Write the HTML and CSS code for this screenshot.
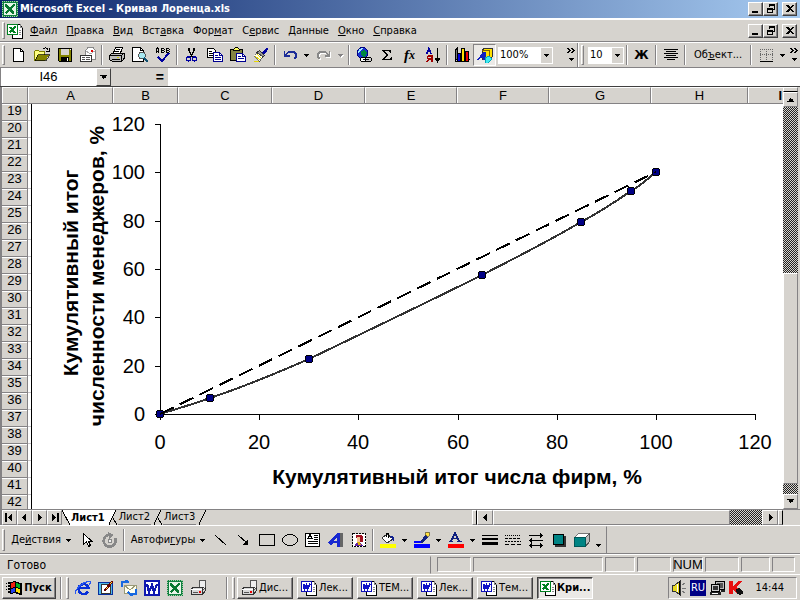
FILE: index.html
```html
<!DOCTYPE html>
<html lang="ru">
<head>
<meta charset="utf-8">
<title>Microsoft Excel - Кривая Лоренца.xls</title>
<link rel="stylesheet" href="styles.css">
</head>
<body>
<svg class="defs" aria-hidden="true">
  <symbol id="xl" viewBox="0 0 16 16"><rect width="16" height="16" fill="#108040"/><path d="M0 .5h16M0 15.500h16M.5 0v16M15.500 0v16" stroke="#a8d0a8" stroke-dasharray="1 1"/><path d="M2 2h12v12H2z" fill="#e8f4e8"/><path d="M4 3.500l8 9M3 3.500l8 9" stroke="#087830" stroke-width="2"/><path d="M12.500 3.500l-9 9" stroke="#087830" stroke-width="1.500"/></symbol>
  <symbol id="xldoc" viewBox="0 0 16 16"><path d="M6 1.500h7l2.500 3v11h-10z" fill="#fff" stroke="#000"/><path d="M13 1v3.500h3M12 7.500h2M12 9.500h2M12 11.500h2" fill="none" stroke="#888"/><rect x=".5" y="1.500" width="10" height="10" fill="#fff" stroke="#008020"/><path d="M3 4l5 6M8.500 3.500l-6 6" stroke="#008020" stroke-width="2"/></symbol>
  <symbol id="wddoc" viewBox="0 0 16 16"><path d="M6 1.500h7l2.500 3v11h-10z" fill="#fff" stroke="#000"/><path d="M13 1v3.500h3M12 7.500h2M12 9.500h2M12 11.500h2" fill="none" stroke="#888"/><rect x=".5" y="1.500" width="10" height="10" fill="#fff" stroke="#1010b8"/><path d="M2.500 4l1 5 2-4 1 4 2.500-5.500" fill="none" stroke="#1010c8" stroke-width="1.800"/></symbol>
  <symbol id="down" viewBox="0 0 5 3"><path d="M0 0h5v1H4v1H3v1H2V2H1V1H0z" fill="currentColor"/></symbol>
  <symbol id="more" viewBox="0 0 9 14"><path d="M0 0h2l2 2.500L2 5H0l2-2.500zM4 0h2l2 2.500L6 5H4l2-2.500zM2 10h5L4.500 13z"/></symbol>
  <symbol id="min" viewBox="0 0 10 10"><path d="M1 7h6v2H1z"/></symbol>
  <symbol id="rest" viewBox="0 0 10 10"><path d="M3 0h6v6H7V5h1V2H4v1H3zM1 4h6v5H1zM2 6v2h4V6z" fill-rule="evenodd"/></symbol>
  <symbol id="cls" viewBox="0 0 10 10"><path d="M1 1h2l2 2 2-2h2L6 4.500 9 8H7L5 6 3 8H1l3-3.500z"/></symbol>
  <symbol id="drive" viewBox="0 0 16 16"><path d="M10 0h5v8l-2 2H9V2z" fill="#eee" stroke="#555"/><path d="M1 9l3-2h10l-2 2v5H1z" fill="#d8d8d8" stroke="#333"/><path d="M1 9h11" stroke="#fff"/><path d="M3 12h5" stroke="#555"/><path d="M9 11h2v2H9z" fill="#e00"/><path d="M13 14l2-3V7" fill="none" stroke="#333"/></symbol>
</svg>
<div class="window">
  <header class="title">
    <svg class="ic"><use href="#xl"/></svg>
    <h1>Microsoft Excel - Кривая Лоренца.xls</h1>
    <div class="caption">
      <button aria-label="Свернуть"><svg><use href="#min"/></svg></button>
      <button aria-label="Восстановить"><svg><use href="#rest"/></svg></button>
      <button aria-label="Закрыть" class="close"><svg><use href="#cls"/></svg></button>
    </div>
  </header>

  <nav class="menu">
    <i class="grip"></i>
    <svg class="ic"><use href="#xldoc"/></svg>
    <button><u>Ф</u>айл</button><button><u>П</u>равка</button><button><u>В</u>ид</button><button>Вст<u>а</u>вка</button><button>Фор<u>м</u>ат</button><button>С<u>е</u>рвис</button><button><u>Д</u>анные</button><button><u>О</u>кно</button><button><u>С</u>правка</button>
    <div class="caption">
      <button aria-label="Свернуть книгу"><svg><use href="#min"/></svg></button>
      <button aria-label="Восстановить книгу"><svg><use href="#rest"/></svg></button>
      <button aria-label="Закрыть книгу" class="close"><svg><use href="#cls"/></svg></button>
    </div>
  </nav>

  <div class="tools">
    <div class="bar standard">
      <i class="grip"></i>
      <button class="tb" aria-label="Создать"><svg class="ic" viewBox="0 0 16 16"><path d="M2.500 1.500h7l3 3v10h-10z" fill="#fff" stroke="#000"/><path d="M9.500 1.500v3h3" fill="none" stroke="#000"/></svg></button>
      <button class="tb" aria-label="Открыть"><svg class="ic" viewBox="0 0 16 16"><path d="M.5 13.500v-9l1-1h3l1 1h5v3" fill="#ffff80" stroke="#808000"/><path d="M.5 13.500l3-6h12l-4 6z" fill="#848400" stroke="#000" stroke-width=".7"/><path d="M9 2c2-2 4-1 5 1m1-2v3h-3" fill="none" stroke="#000"/></svg></button>
      <button class="tb" aria-label="Сохранить"><svg class="ic" viewBox="0 0 16 16"><path d="M1.500 1.500h13v13h-12l-1-1z" fill="#848400" stroke="#000"/><path d="M4 2h8v6H4z" fill="#d6d3ce"/><path d="M4 10h8v4H4z" fill="#000"/><path d="M10 11h1v3h-1zM13 2h1v1h-1z" fill="#fff"/></svg></button>
      <button class="tb" aria-label="Сообщение"><svg class="ic" viewBox="0 0 16 16"><path d="M5.500 9V3.500L8 .5h5l2.500 3v9h-4" fill="#fff" stroke="#888"/><path d="M6 4l4 3 5-3" fill="none" stroke="#aaa"/><path d="M11 3h2v2h-2z" fill="#e00000"/><path d="M.5 8.500h11v6H.5z" fill="#fff" stroke="#333"/><path d="M2 10.500h3m1 0h4M2 12.500h3m1 0h4" stroke="#555"/></svg></button>
      <i class="sep"></i>
      <button class="tb" aria-label="Печать"><svg class="ic" viewBox="0 0 16 16"><path d="M4.500 6l2-5.500h7l-2 5.500" fill="#fff" stroke="#000"/><path d="M7 2.500h4M6 4.500h4" stroke="#000"/><path d="M.5 8.500l3-2.500h12v5l-3 3.500H3.500l-3-2z" fill="#bbb" stroke="#000"/><path d="M1 8.500h11l3-2M12.500 9v5M3 12.500h8" fill="none" stroke="#000"/><path d="M8 10h2v1H8z" fill="#cc0"/></svg></button>
      <button class="tb" aria-label="Предварительный просмотр"><svg class="ic" viewBox="0 0 16 16"><path d="M.5.5h8l3 3v11H.5z" fill="#fff" stroke="#000"/><path d="M8.500.5v3h3" fill="none" stroke="#000"/><circle cx="10" cy="8.500" r="3.300" fill="#a8e8f0" stroke="#555"/><path d="M12 11l4 4" stroke="#105070" stroke-width="2"/></svg></button>
      <button class="tb" aria-label="Орфография"><svg class="ic" viewBox="0 0 16 16"><path d="M1.500 6V2l1-1 1 1v4M2 4.500h2M6.500 6V1.500h2M7 3.500h2M7 5.500h2M9.500 2v1M9.500 4v1M11.500 6V1.500h2M12 3.500h2M12 5.500h2M14.500 2v1M14.500 4v1" fill="none" stroke="#000"/><path d="M3 10l4 4 7-8" fill="none" stroke="#0000a0" stroke-width="2"/></svg></button>
      <i class="sep"></i>
      <button class="tb" aria-label="Вырезать"><svg class="ic" viewBox="0 0 16 16"><path d="M5 1v3l4 7M10 1v3L6 11" fill="none" stroke="#000" stroke-width="1.300"/><circle cx="4.500" cy="12" r="2" fill="none" stroke="#0000a0" stroke-width="1.300"/><circle cx="10.500" cy="12" r="2" fill="none" stroke="#0000a0" stroke-width="1.300"/></svg></button>
      <button class="tb" aria-label="Копировать"><svg class="ic" viewBox="0 0 16 16"><path d="M.5 1.500h6l2 2v7h-8z" fill="#fff" stroke="#000"/><path d="M2 4.500h3M2 6.500h4M2 8.500h4" stroke="#000"/><path d="M6.500 5.500h6l3 3v6h-9z" fill="#fff" stroke="#000090"/><path d="M12.500 5.500v3h3M8 8.500h3M8 10.500h6M8 12.500h6" fill="none" stroke="#000090"/></svg></button>
      <button class="tb" aria-label="Вставить"><svg class="ic" viewBox="0 0 16 16"><path d="M.5 2.500h12v11H.5z" fill="#848442" stroke="#000"/><path d="M3.500 3.500v-1l2-2h2l2 2v1z" fill="#ffff60" stroke="#000"/><path d="M6.500 6.500h6l3 3v5h-9z" fill="#fff" stroke="#000090"/><path d="M8 9.500h3M8 11.500h6M12.500 6.500v3h3" fill="none" stroke="#000090"/></svg></button>
      <button class="tb" aria-label="Формат по образцу"><svg class="ic" viewBox="0 0 16 16"><path d="M14 1l1 1-4 5-2-1z" fill="#0000a0" stroke="#0000a0"/><path d="M6.500 3.500l5 5-2 1.500-6-4z" fill="#999" stroke="#333"/><path d="M3.500 6l6 4-3 4.500L.5 9z" fill="#fffff0" stroke="#333" stroke-width=".7"/><path d="M2 9l5 4m-3-6l4 4M1 14.500h5" stroke="#e8d800"/></svg></button>
      <i class="sep"></i>
      <button class="tb" aria-label="Отменить"><svg class="ic" viewBox="0 0 16 16"><path d="M2.500 4v5h5M3 8.500l4-3.500h5l2 2v3l-2 2" fill="none" stroke="#1c2c98" stroke-width="1.500"/></svg></button>
      <button class="drop" aria-label="Список отмены"><svg><use href="#down"/></svg></button>
      <button class="tb off" aria-label="Вернуть"><svg class="ic" viewBox="0 0 16 16"><path d="M13.500 4v5h-5M13 8.500L9 5H4L2 7v3l2 2" fill="none" stroke="#888" stroke-width="1.500"/></svg></button>
      <button class="drop off" aria-label="Список возврата"><svg><use href="#down"/></svg></button>
      <i class="sep"></i>
      <button class="tb" aria-label="Гиперссылка"><svg class="ic" viewBox="0 0 16 16"><circle cx="6.500" cy="6" r="5.500" fill="#1830d0" stroke="#000080"/><path d="M5 4l3-1 3 2-1 4-3 1-2-2z" fill="#008840"/><path d="M3 2l4-1-3 4-2 1z" fill="#a0f0ff"/><rect x="4.500" y="10.500" width="6" height="4" rx="2" fill="#fff" stroke="#000"/><rect x="9.500" y="10.500" width="6" height="4" rx="2" fill="#ccc" stroke="#000"/><path d="M7 12.500h6" stroke="#000"/></svg></button>
      <button class="tb" aria-label="Автосумма"><svg class="ic" viewBox="0 0 16 16"><path d="M3 3h9v3h-1l-1-2H6l3 4-4 4h6l1-2h1v3H3v-1l4-4-4-4z" fill="#000"/></svg></button>
      <button class="tb fx" aria-label="Вставка функции"><i>f</i><sub>x</sub></button>
      <button class="tb" aria-label="Сортировка по возрастанию"><svg class="ic" viewBox="0 0 16 16"><path d="M1 6.500h2m2 0h2M2 6l2-5 2 5M2.500 4.500h3" fill="none" stroke="#0000a0" stroke-width="1.300"/><path d="M7 15V9H3.500L2.500 10v1l1 1H7M4.500 12L2 15" fill="none" stroke="#a00000" stroke-width="1.600"/><path d="M12.500 1v13M10 11l2.500 4 2.500-4z" stroke="#000"/></svg></button>
      <i class="sep"></i>
      <button class="tb" aria-label="Мастер диаграмм"><svg class="ic" viewBox="0 0 16 16"><path d="M1 4l2-3v11l-2 2zM1 14h13l2-2" fill="#777" stroke="#000"/><path d="M3.500 6.500h3v8h-3z" fill="#0000e0" stroke="#000"/><path d="M7.500 1.500h3v13h-3z" fill="#ffe000" stroke="#000"/><path d="M11.500 4.500h3v10h-3z" fill="#f00000" stroke="#000"/></svg></button>
      <button class="tb on" aria-label="Рисование"><svg class="ic" viewBox="0 0 16 16"><path d="M5 3l3-2h7v9l-2 2H5z" fill="#ffe000" stroke="#333"/><path d="M5 3.500h7M12.500 3v8" fill="none" stroke="#806000"/><path d="M0 13L6 5h3v8H6v-2H3l-1 2z" fill="#1020c0"/><path d="M8 11l4-2 3 3-4 4H9z" fill="#40e8f0" stroke="#00a8b8"/></svg></button>
      <span class="combo zoom"><select aria-label="Масштаб"><option>100%</option></select><svg><use href="#down"/></svg></span>
      <button class="more" aria-label="Другие кнопки"><svg><use href="#more"/></svg></button>
    </div>
    <div class="bar format">
      <i class="grip"></i>
      <span class="combo size"><select aria-label="Размер шрифта"><option>10</option></select><svg><use href="#down"/></svg></span>
      <i class="sep"></i>
      <button class="tb bold">Ж</button>
      <i class="sep"></i>
      <button class="tb" aria-label="По центру"><svg class="ic" viewBox="0 0 16 16"><path d="M1 2.500h14M3 4.500h10M1 6.500h14M3 8.500h10M1 10.500h14M4 12.500h8" stroke="#000"/></svg></button>
      <i class="sep"></i>
      <button class="object">Об<u>ъ</u>ект...</button>
      <i class="sep"></i>
      <button class="tb" aria-label="Границы"><svg class="ic" viewBox="0 0 16 16"><path d="M2 2.500h13M2 7.500h13M2.500 2v11M8.500 2v11M14.500 2v11" stroke="#666" stroke-dasharray="1 1"/><path d="M2 14.500h13" stroke="#000"/></svg></button>
      <button class="drop" aria-label="Виды границ"><svg><use href="#down"/></svg></button>
      <button class="more" aria-label="Другие кнопки"><svg><use href="#more"/></svg></button>
    </div>
  </div>

  <div class="formula">
    <div class="name"><input aria-label="Имя" value="I46"><button aria-label="Список имён"><svg><use href="#down"/></svg></button></div>
    <button class="equals">=</button>
    <input class="fx-input" aria-label="Строка формул">
  </div>

  <main class="sheet">
    <div class="cols"><span></span><span>A</span><span>B</span><span>C</span><span>D</span><span>E</span><span>F</span><span>G</span><span>H</span><span class="cur">I</span></div>
    <div class="rows"><div>
      <span>19</span><span>20</span><span>21</span><span>22</span><span>23</span><span>24</span><span>25</span><span>26</span><span>27</span><span>28</span><span>29</span><span>30</span><span>31</span><span>32</span><span>33</span><span>34</span><span>35</span><span>36</span><span>37</span><span>38</span><span>39</span><span>40</span><span>41</span><span>42</span>
    </div></div>
    <div class="plot">
      <svg class="chart" viewBox="28 104 755 405" role="img" aria-label="Кривая Лоренца">
        <path class="frame" d="M31.500 104v405"/>
        <path class="guides" d="M28 120.500h3m-3 17h3m-3 17h3m-3 17h3m-3 17h3m-3 17h3m-3 17h3m-3 17h3m-3 17h3m-3 17h3m-3 17h3m-3 17h3m-3 17h3m-3 17h3m-3 17h3m-3 17h3m-3 17h3m-3 17h3m-3 17h3m-3 17h3m-3 17h3m-3 17h3m-3 17h3"/>
        <path class="axis" d="M160.500 124v296M155 414.500h601M155 124.500h5m-5 48h5m-5 49h5m-5 48h5m-5 48h5m-5 49h5M259.500 414v6M358.500 414v6M458.500 414v6M557.500 414v6M656.500 414v6M755.500 414v6"/>
        <path class="lorenz" d="M160 414C177 409 193 404 210 398C243 387 277 373 309 359C367 331 424 304 482 275C515 258 549 241 581 222C598 213 615 202 631 191C640 186 648 179 656 172"/>
        <g class="dots"><circle cx="160" cy="414" r="4"/><circle cx="210" cy="398" r="4"/><circle cx="309" cy="359" r="4"/><circle cx="482" cy="275" r="4"/><circle cx="581" cy="222" r="4"/><circle cx="631" cy="191" r="4"/><circle cx="656" cy="172" r="4"/></g>
        <path class="equal" d="M160 414L656 172"/>
        <g class="ylab"><text x="145" y="131">120</text><text x="145" y="179">100</text><text x="145" y="228">80</text><text x="145" y="276">60</text><text x="145" y="324">40</text><text x="145" y="373">20</text><text x="145" y="421">0</text></g>
        <g class="xlab"><text x="160" y="449">0</text><text x="259" y="449">20</text><text x="358" y="449">40</text><text x="458" y="449">60</text><text x="557" y="449">80</text><text x="656" y="449">100</text><text x="755" y="449">120</text></g>
        <g class="names"><text x="457" y="484">Кумулятивный итог числа фирм, %</text><text transform="translate(78 273) rotate(-90)">Кумулятивный итог</text><text transform="translate(104 276) rotate(-90)">численности менеджеров, %</text></g>
      </svg>
    </div>
    <div class="vscroll">
      <i class="split"></i>
      <button aria-label="Вверх"><svg class="up"><use href="#down"/></svg></button>
      <i class="track before"></i><i class="thumb"></i><i class="track after"></i>
      <button aria-label="Вниз"><svg><use href="#down"/></svg></button>
    </div>
  </main>

  <div class="tabs">
    <div class="nav">
      <button aria-label="Первый лист"><svg viewBox="0 0 9 9"><path d="M0 0h2v9H0zM7 0v9L3 4.500z"/></svg></button>
      <button aria-label="Предыдущий лист"><svg viewBox="0 0 9 9"><path d="M6 0v9L2 4.500z"/></svg></button>
      <button aria-label="Следующий лист"><svg viewBox="0 0 9 9"><path d="M3 0v9l4-4.500z"/></svg></button>
      <button aria-label="Последний лист"><svg viewBox="0 0 9 9"><path d="M2 0v9l4-4.500zM7 0h2v9H7z"/></svg></button>
    </div>
    <svg class="edge first" viewBox="0 0 8 15"><path d="M0 0h8v15z" fill="#fff"/><path d="M0 0l8 15" stroke="#000"/></svg><button class="tab active">Лист1</button><svg class="edge" viewBox="0 0 12 15"><path d="M0 0h10L3 15H0z" fill="#fff"/><path d="M3 14.500L10 0M7 8l4 7" stroke="#000" fill="none"/></svg><button class="tab">Лист2</button><svg class="edge" viewBox="0 0 12 15"><path d="M3 14.500L10 0M7 8l4 7" stroke="#000" fill="none"/></svg><button class="tab">Лист3</button><svg class="edge" viewBox="0 0 12 15"><path d="M3 14.500L10 0" stroke="#000"/></svg>
    <div class="hscroll">
      <i class="split"></i>
      <button aria-label="Влево"><svg viewBox="0 0 9 9"><path d="M6 1v7L2 4.500z"/></svg></button>
      <i class="thumb"></i><i class="track"></i>
      <button aria-label="Вправо"><svg viewBox="0 0 9 9"><path d="M3 1v7l4-3.500z"/></svg></button>
      <i class="split"></i>
    </div>
  </div>

  <div class="dock">
  <div class="draw">
    <i class="grip"></i>
    <button class="word actions"><span>Де<u>й</u>ствия</span><svg><use href="#down"/></svg></button>
    <button class="tb" aria-label="Выбор объектов"><svg class="ic" viewBox="0 0 16 16"><path d="M4.500 1.500v11l3-3 2 5 2-1-2-4h3.500z" fill="#fff" stroke="#000"/></svg></button>
    <button class="tb" aria-label="Свободное вращение"><svg class="ic" viewBox="0 0 16 16"><path d="M6 3a6 6 0 1 0 7 3" fill="none" stroke="#888" stroke-width="2.500"/><path d="M6 0l6 3-5 4z" fill="#888"/><circle cx="8" cy="9" r="2" fill="#eee" stroke="#888"/></svg></button>
    <i class="sep"></i>
    <button class="word shapes"><span>Автофи<u>г</u>уры</span><svg><use href="#down"/></svg></button>
    <button class="tb" aria-label="Линия"><svg class="ic" viewBox="0 0 16 16"><path d="M2 3l11 10" stroke="#000"/></svg></button>
    <button class="tb" aria-label="Стрелка"><svg class="ic" viewBox="0 0 16 16"><path d="M2 3l9 8" stroke="#000"/><path d="M12 7v6H6z"/></svg></button>
    <button class="tb" aria-label="Прямоугольник"><svg class="ic" viewBox="0 0 16 16"><path d="M.5 2.500h15v11H.5z" fill="none" stroke="#000"/></svg></button>
    <button class="tb" aria-label="Овал"><svg class="ic" viewBox="0 0 16 16"><ellipse cx="8" cy="8" rx="7.500" ry="5.500" fill="none" stroke="#000"/></svg></button>
    <button class="tb" aria-label="Надпись"><svg class="ic" viewBox="0 0 16 16"><path d="M.5 1.500h14v13H.5z" fill="#fff" stroke="#000"/><path d="M2.500 7.500l2.500-5 2.500 5M3 6h4M9 3.500h4M9 5.500h4M9 7.500h4M3 9.500h10M3 11.500h10" fill="none" stroke="#000"/></svg></button>
    <button class="tb" aria-label="Объект WordArt"><svg class="ic" viewBox="0 0 16 16"><path d="M12 1h3v14h-3z" fill="#666"/><path d="M0 11L9 1h3v14H9v-4H5l-2 2z" fill="#1828d0"/><path d="M9 5v4H6z" fill="#d6d3ce"/></svg></button>
    <button class="tb" aria-label="Картинка"><svg class="ic" viewBox="0 0 16 16"><path d="M1.500 1.500h13v13h-13z" fill="#fff" stroke="#000" stroke-dasharray="2 1"/><path d="M5 3h5l2 2v5H9V6H5z" fill="#a01020"/><path d="M6 5h3v5H6z" fill="#f4c090"/><path d="M4 14l1-3h5l2 3z" fill="#6020a0"/><path d="M7 10l2 3" stroke="#e0b000" stroke-width="2"/></svg></button>
    <i class="sep"></i>
    <button class="tb" aria-label="Цвет заливки"><svg class="ic" viewBox="0 0 16 16"><path d="M2 6l5-4 6 5-6 4z" fill="#fff" stroke="#333"/><path d="M6 5V1h2v5" fill="none" stroke="#000"/><path d="M10 4c4 0 5 2 4 6l-2-3z" fill="#102090"/><path d="M0 12h16v4H0z" fill="#ff0"/></svg></button><button class="drop" aria-label="Цвета заливки"><svg><use href="#down"/></svg></button>
    <button class="tb" aria-label="Цвет линий"><svg class="ic" viewBox="0 0 16 16"><path d="M0 9.500h5l2 1" fill="none" stroke="#00f" stroke-width="2"/><path d="M7 9l4-6 3 2-4 5-3 1z" fill="#102080"/><path d="M12 0h3l1 2-2 3-3-2z" fill="#ffe040" stroke="#333" stroke-width=".6"/><path d="M0 12h16v4H0z" fill="#00f"/></svg></button><button class="drop" aria-label="Цвета линий"><svg><use href="#down"/></svg></button>
    <button class="tb" aria-label="Цвет шрифта"><svg class="ic" viewBox="0 0 16 16"><path d="M1 9.500h4m4 0h5M3 9l4-8 4 8M5 6.500h5" fill="none" stroke="#102080" stroke-width="1.600"/><path d="M0 12h16v4H0z" fill="#f00"/></svg></button><button class="drop" aria-label="Цвета шрифта"><svg><use href="#down"/></svg></button>
    <button class="tb" aria-label="Тип линии"><svg class="ic" viewBox="0 0 16 16"><path d="M0 3h16v1H0zM0 6h16v2H0zM0 10h16v3H0z"/></svg></button>
    <button class="tb" aria-label="Тип штриха"><svg class="ic" viewBox="0 0 16 16"><path d="M0 3.500h16" stroke="#000" stroke-dasharray="1 1"/><path d="M0 6.500h16" stroke="#000" stroke-dasharray="3 1"/><path d="M0 9.500h16" stroke="#000" stroke-dasharray="2 1"/><path d="M0 12.500h16" stroke="#000" stroke-dasharray="4 2"/></svg></button>
    <button class="tb" aria-label="Вид стрелки"><svg class="ic" viewBox="0 0 16 16"><path d="M1 3.500h14M1 8.500h14M1 13.500h14" stroke="#000"/><path d="M12 1v5l3-2.500zM4 6v5L1 8.500zM4 11v5l-3-2.500zM12 11v5l3-2.500z"/></svg></button>
    <button class="tb" aria-label="Тень"><svg class="ic" viewBox="0 0 16 16"><path d="M4 4h11v11H4z" fill="#333"/><path d="M2.500 2.500h10v10h-10z" fill="#008484" stroke="#000"/></svg></button>
    <button class="tb" aria-label="Объём"><svg class="ic" viewBox="0 0 16 16"><path d="M.5 5.500l4-4h11l-4 4z" fill="#fff" stroke="#777"/><path d="M11.500 5.500l4-4v8l-4 5z" fill="#bbb" stroke="#555"/><path d="M.5 5.500h11v9H.5z" fill="#008484" stroke="#005858"/></svg></button>
    <button class="drop last" aria-label="Другие кнопки"><svg><use href="#down"/></svg></button>
  </div>
  </div>

  <footer class="status"><span class="ready">Готово</span><i class="c34"></i><i class="c130"></i><i class="c30"></i><i class="c34"></i><span class="num c30">NUM</span><i class="c34"></i><i class="c29"></i><i class="c23"></i></footer>
</div>

<div class="taskbar">
  <button class="start"><svg class="ic" viewBox="0 0 16 16"><path d="M0 3h1v1H0zM0 6h1v1H0zM0 9h1v1H0zM2 2h2v2H2zM2 5h2v2H2zM2 8h2v2H2zM2 11h2v2H2z" fill="#000"/><path d="M4 2l5-1 1 1 6 1v12l-6-1-1-1-5 1z" fill="#000"/><path d="M5 3l4-1v5L5 8z" fill="#f02010"/><path d="M10 3l4 1v4l-4-1z" fill="#00b020"/><path d="M5 9l4-1v4l-4 1z" fill="#2040f0"/><path d="M10 8l4 1v4l-4-1z" fill="#ffe000"/></svg>Пуск</button>
  <i class="sep"></i><i class="grip"></i>
  <div class="quick">
    <button class="tb" aria-label="Internet Explorer"><svg class="ic" viewBox="0 0 16 16"><path d="M13 11.500A5 5 0 1 1 13.500 8H4" fill="none" stroke="#0830d8" stroke-width="2.600"/><path d="M1 14C-1 10 8 1 15 1.500c1 1 0 2-1 3" fill="none" stroke="#2858f0" stroke-width="1.300"/></svg></button>
    <button class="tb" aria-label="Рабочий стол"><svg class="ic" viewBox="0 0 16 16"><path d="M.5 2.500h14v12H.5z" fill="#50b8e8" stroke="#0830a0"/><path d="M3.500 4.500h9v9h-9z" fill="#fff" stroke="#333"/><path d="M6 11l2-3 6-7 1 1-6 7z" fill="#ffe040" stroke="#600"/></svg></button>
    <button class="tb" aria-label="Outlook Express"><svg class="ic" viewBox="0 0 16 16"><path d="M3 5h12v8H3z" fill="#fffff0" stroke="#997"/><path d="M3 5l6 5 6-5" fill="none" stroke="#997"/><path d="M1 7V2h3l2-1 2 2M15 9v5h-3l-2 1-3-3" fill="none" stroke="#1868e0" stroke-width="2.400"/></svg></button>
    <button class="tb" aria-label="Microsoft Word"><svg class="ic" viewBox="0 0 16 16"><rect width="16" height="16" fill="#1018b0"/><path d="M2 2h12v12H2z" fill="#fff"/><path d="M3 4l2 8 3-7 2 7 3-8" fill="none" stroke="#1018b0" stroke-width="2.200"/></svg></button>
    <button class="tb" aria-label="Microsoft Excel"><svg class="ic"><use href="#xl"/></svg></button>
    <button class="tb" aria-label="Диск"><svg class="ic"><use href="#drive"/></svg></button>
  </div>
  <i class="sep"></i><i class="grip"></i>
  <div class="tasks">
    <button><svg class="ic"><use href="#drive"/></svg>Дис...</button>
    <button><svg class="ic"><use href="#wddoc"/></svg>Лек...</button>
    <button><svg class="ic"><use href="#wddoc"/></svg>ТЕМ...</button>
    <button><svg class="ic"><use href="#wddoc"/></svg>Лек...</button>
    <button><svg class="ic"><use href="#wddoc"/></svg>Тем...</button>
    <button class="pressed"><svg class="ic"><use href="#xldoc"/></svg>Кри...</button>
  </div>
  <div class="tray">
    <svg class="ic" viewBox="0 0 16 16"><path d="M1 5h3l5-4v14l-5-4H1z" fill="#e8d820" stroke="#333"/><path d="M8 1v14" stroke="#000"/><path d="M6 4v8" stroke="#fff"/><path d="M11 5l3-2M11 8h4M11 11l3 2" stroke="#777"/></svg>
    <span class="lang">RU</span>
    <svg class="ic" viewBox="0 0 16 16"><path d="M6.500 1.500h9v8h-9z" fill="#bbb" stroke="#000"/><path d="M8 3h6v5H8z" fill="#555"/><path d="M2.500 4.500h8v7h-8z" fill="#ccc" stroke="#000"/><path d="M4 6h5v4H4z" fill="#333"/><path d="M1 12h11v3H1zM12 10h4v2h-4z" fill="#222"/><path d="M3 13.500h6" stroke="#fff"/></svg>
    <svg class="ic" viewBox="0 0 16 16"><path d="M1 1h4v5l5-5h5L8 7l4 4-2 3-5-4v4H1z" fill="#e81010"/><path d="M8 9l3-1 3 2v3l-2 2-3-1zM13 13l2-3v5z" fill="#111"/></svg>
    <time>14:44</time>
  </div>
</div>
</body>
</html>
```
FILE: styles.css
```css
:root {
  --face: #d6d3ce;
  --shade: #848284;
  --ui: "DejaVu Sans Condensed", "DejaVu Sans", sans-serif;
}
* { box-sizing: border-box; }
body {
  margin: 0;
  min-height: 100vh;
  display: flex;
  flex-direction: column;
  background: var(--face);
  color: #000;
  font: 11px/14px var(--ui);
}
button, select, input { font: inherit; color: inherit; margin: 0; padding: 0; border: 0; border-radius: 0; background: none; }
button { display: flex; align-items: center; justify-content: center; flex: none; white-space: nowrap; }
svg { flex: none; display: block; shape-rendering: crispEdges; }
.defs { position: absolute; width: 0; height: 0; }
.ic { width: 16px; height: 16px; }
u { text-underline-offset: 1px; }

.window { flex: 1; display: flex; flex-direction: column; min-height: 0; }

/* title and menu */
.title {
  height: 18px;
  display: flex;
  align-items: center;
  gap: 2px;
  padding: 0 3px 0 2px;
  background: linear-gradient(to right, #0a246a, #a6caf0);
  color: #fff;
}
.title h1 { margin: 0; font-size: 11px; line-height: 18px; font-weight: bold; }
.caption { display: flex; margin-left: auto; }
.caption button {
  width: 15px;
  height: 14px;
  background: var(--face);
  color: #000;
  border: 1px solid;
  border-color: #fff #404040 #404040 #fff;
  box-shadow: inset -1px -1px var(--shade);
}
.caption svg { width: 10px; height: 10px; }
.caption .close { margin-left: 4px; }
.menu {
  height: 24px;
  display: flex;
  align-items: center;
  padding-right: 3px;
  border-top: 2px solid #fff;
  border-bottom: 1px solid var(--shade);
}
.menu > button { padding: 0 4px 0 5px; }
.menu > .ic { margin-right: 2px; }
.grip { width: 3px; align-self: stretch; margin: 2px; border: 1px solid; border-color: #fff var(--shade) var(--shade) #fff; flex: none; }

/* toolbars */
.tools { display: flex; height: 26px; border-top: 1px solid #fff; border-bottom: 1px solid var(--shade); }
.bar { display: flex; align-items: center; }
.standard { width: 578px; border-right: 1px solid var(--shade); flex: none; }
.format { flex: 1; border-left: 1px solid #fff; }
.tb { width: 23px; height: 22px; }
.drop { width: 11px; height: 22px; }
.drop svg, .word svg, .combo svg { width: 5px; height: 3px; }
.off { color: var(--shade); }
.off svg { filter: drop-shadow(1px 1px #fff); }
.on { border: 1px solid; border-color: var(--shade) #fff #fff var(--shade); background: #ebe9e6; }
.sep { width: 2px; align-self: stretch; margin: 2px; background: linear-gradient(to right, var(--shade) 50%, #fff 50%); flex: none; }
.fx { font: bold 15px/16px "Liberation Serif", serif; }
.fx sub { font-size: 12px; line-height: 10px; font-style: italic; }
.combo { display: flex; align-items: center; background: #fff; height: 17px; position: relative; margin-left: 2px; }
.combo select { appearance: none; width: 100%; height: 17px; padding-left: 2px; }
.combo svg { position: absolute; right: 4px; top: 7px; z-index: 1; pointer-events: none; }
.combo::after { content: ""; position: absolute; right: 1px; top: 1px; width: 11px; height: 15px; background: var(--face); pointer-events: none; }
.zoom { width: 55px; }
.size { width: 36px; }
.more { width: 12px; height: 22px; margin-left: auto; }
.more svg { width: 9px; height: 14px; }
.bold { font-weight: bold; font-size: 13px; }
.object { width: 60px; }

/* name box and formula line */
.formula { display: flex; height: 19px; border-bottom: 1px solid #404040; }
.name { display: flex; width: 111px; background: #fff; border-left: 1px solid var(--shade); }
.name input { flex: 1; min-width: 0; text-align: center; font: 13px/16px "Liberation Sans", sans-serif; }
.name button { width: 15px; background: var(--face); border: 1px solid; border-color: #fff #404040 #404040 #fff; }
.name svg { width: 7px; height: 4px; }
.equals { width: 57px; justify-content: flex-end; padding-right: 4px; font: bold 14px/16px "Liberation Sans", sans-serif; }
.fx-input { flex: 1; background: #fff; min-width: 0; }

/* worksheet */
.sheet {
  flex: 1;
  min-height: 0;
  display: grid;
  grid-template: 17px minmax(0, 1fr) / 26px minmax(0, 1fr) 15px;
  border-left: 2px solid var(--shade);
  border-right: 2px solid var(--face);
}
.cols {
  grid-column: 1 / 3;
  display: grid;
  grid-template-columns: 26px 85fr 65fr 94fr 93fr 92fr 92fr 102fr 97fr 35fr;
  font: 13px/16px "Liberation Sans", sans-serif;
  text-align: center;
  border-bottom: 1px solid var(--shade);
  overflow: hidden;
}
.cols span { border-left: 1px solid #fff; border-top: 1px solid #fff; border-right: 1px solid var(--shade); }
.cols .cur { font-weight: bold; text-align: right; padding-right: 1px; border-right: 0; border-bottom: 1px solid #000; }
.rows { position: relative; overflow: hidden; }
.rows > div { position: absolute; inset: 0; }
.rows span {
  display: block;
  height: 17px;
  font: 13px/14px "Liberation Sans", sans-serif;
  text-align: center;
  border-bottom: 1px solid var(--shade);
  border-right: 1px solid var(--shade);
  box-shadow: inset 0 1px #fff;
}
.rows span:last-child { height: 14px; border-bottom: 0; }
.plot { background: #fff; min-height: 0; overflow: hidden; }
.chart { width: 100%; height: 100%; }
.frame, .axis { stroke: #000; fill: none; }
.guides { stroke: #c6c3c6; }
.equal { stroke: #000; stroke-width: 2; stroke-dasharray: 15 7; }
.lorenz { stroke: #333; stroke-width: 2; fill: none; }
.dots { fill: #000084; stroke: #000; }
.ylab, .xlab { font: 20px "Liberation Sans", sans-serif; text-anchor: middle; }
.ylab { text-anchor: end; }
.names { font: bold 21px "Liberation Sans", sans-serif; text-anchor: middle; }

/* scrollbars */
.vscroll { grid-area: 1 / 3 / 3 / 4; display: flex; flex-direction: column; min-height: 0; }
.vscroll button, .hscroll button, .thumb, .split { background: var(--face); border: 1px solid; border-color: #fff var(--shade) var(--shade) #fff; }
.vscroll button { height: 15px; }
.vscroll button svg { width: 7px; height: 4px; }
.up { transform: rotate(180deg); }
.vscroll .split { height: 5px; border-bottom-color: #000; }
.track { background: repeating-conic-gradient(#222 0 25%, var(--face) 0 50%) 0 0 / 2px 2px; }
.vscroll .before { flex: 166; }
.vscroll .thumb { flex: 210; }
.vscroll .after { flex: 10; }

.tabs { display: flex; height: 16px; border-top: 1px solid var(--shade); border-left: 2px solid var(--shade); }
.nav { display: flex; }
.nav button { width: 15px; border: 1px solid; border-color: #fff var(--shade) var(--shade) #fff; }
.nav svg, .hscroll svg { width: 9px; height: 9px; }
.edge { width: 12px; height: 15px; }
.first { width: 8px; }
.tab { padding: 0 1px; border-bottom: 1px solid var(--shade); }
.active { background: #fff; font-weight: bold; border-bottom: 0; }
.hscroll { display: flex; width: 311px; margin: 0 17px 0 auto; }
.hscroll button { width: 16px; }
.hscroll .split { width: 5px; border-right-color: #000; }
.hscroll .thumb { flex: 237; }
.hscroll .track { flex: 32; }

/* drawing toolbar */
.dock { display: flex; height: 29px; border-top: 1px solid #fff; border-bottom: 1px solid var(--shade); }
.draw { display: flex; align-items: center; border-top: 1px solid var(--face); border-right: 1px solid var(--shade); padding-right: 2px; }
.draw .last { align-items: flex-end; padding-bottom: 4px; }
.word { gap: 5px; height: 22px; }
.actions { width: 68px; }
.shapes { width: 82px; }

.status { display: flex; align-items: center; gap: 2px; height: 20px; padding-right: 5px; border-top: 1px solid #fff; }
.status > * { height: 15px; border: 1px solid; border-color: var(--shade) #fff #fff var(--shade); flex: none; }
.status .ready { flex: 1; height: 18px; margin-right: 4px; padding-left: 6px; border-color: transparent var(--shade) transparent transparent; font-size: 12px; line-height: 16px; }
.c23 { width: 23px; }
.c29 { width: 29px; }
.c30 { width: 30px; }
.c34 { width: 34px; }
.c130 { width: 130px; }
.num { font: 13px/14px "Liberation Sans", sans-serif; display: flex; justify-content: center; }

/* taskbar */
.taskbar { display: flex; align-items: center; height: 27px; padding: 0 3px 0 2px; border-top: 1px solid #fff; }
.start, .tasks button { height: 22px; border: 1px solid; border-color: #fff #404040 #404040 #fff; box-shadow: inset -1px -1px var(--shade); }
.start { width: 54px; font-weight: bold; gap: 2px; margin-right: 2px; }
.quick { display: flex; width: 153px; }
.tasks { display: flex; gap: 4px; }
.tasks button { width: 56px; gap: 2px; justify-content: flex-start; padding-left: 3px; }
.tasks .pressed { border-color: #404040 #fff #fff #404040; box-shadow: inset 1px 1px var(--shade); background: #ebe9e6; font-weight: bold; gap: 1px; padding-left: 2px; }
.tray { display: flex; align-items: center; gap: 3px; width: 129px; height: 22px; margin-left: auto; padding: 0 12px 0 2px; border: 1px solid; border-color: var(--shade) #fff #fff var(--shade); }
.lang { width: 16px; background: #000084; color: #fff; text-align: center; line-height: 16px; }
.tray time { margin-left: auto; }
```
